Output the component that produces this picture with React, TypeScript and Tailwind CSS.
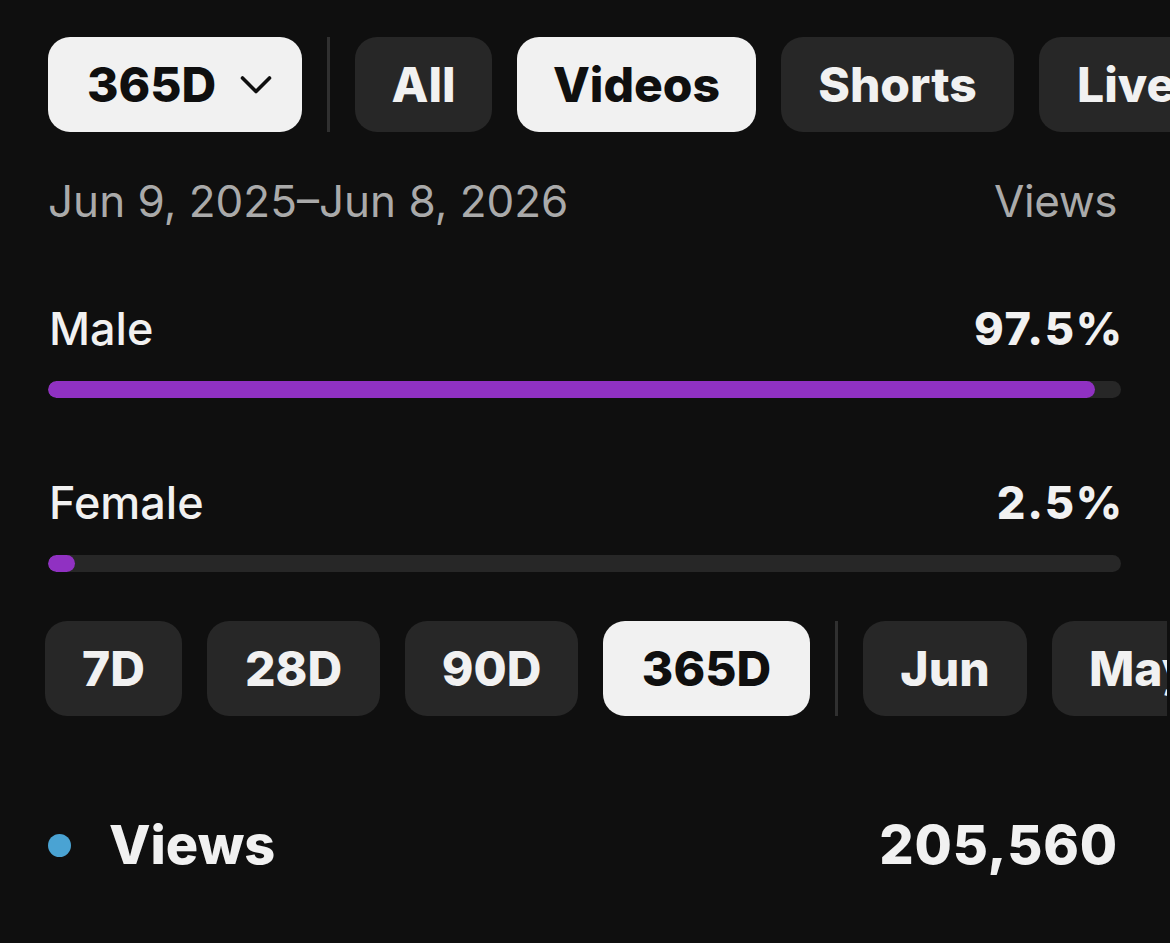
import React from "react";

function Chip({ label, active, w, className = "" }: { label: string; active?: boolean; w?: string; className?: string }) {
  return (
    <div
      className={`shrink-0 h-[95px] rounded-[22px] flex items-center justify-center font-extrabold text-[48px] leading-none ${
        active ? "bg-[#f1f1f1] text-[#0f0f0f]" : "bg-[#272727] text-[#f1f1f1]"
      } ${w ?? ""} ${className}`}
    >
      {label}
    </div>
  );
}

function Bar({ pct }: { pct: number }) {
  return (
    <div className="ml-[48px] mr-[49px] h-[17px] rounded-full bg-[#272727] overflow-hidden">
      <div className="h-full rounded-full bg-[#9031c2]" style={{ width: `${pct}%` }} />
    </div>
  );
}

export default function App() {
  return (
    <div
      className="w-[1170px] h-[943px] bg-[#0f0f0f] overflow-hidden text-[#f1f1f1]"
      style={{ fontFamily: "Inter, 'Noto Sans', sans-serif" }}
    >
      {/* top chips */}
      <div className="pt-[37px] pl-[48px] flex items-center gap-[25px] whitespace-nowrap">
        <div className="shrink-0 w-[254px] h-[95px] rounded-[22px] bg-[#f1f1f1] text-[#0f0f0f] flex items-center pl-[39px] gap-[24px] font-extrabold text-[48px] leading-none">
          <span>365D</span>
          <svg width="32" height="20" viewBox="0 0 32 20" fill="none">
            <polyline points="2.5,3 16,16.5 29.5,3" stroke="#0f0f0f" strokeWidth="3.6" strokeLinecap="round" strokeLinejoin="round" />
          </svg>
        </div>
        <div className="shrink-0 w-[3px] h-[95px] bg-[#303030]" />
        <Chip label="All" w="w-[137px]" />
        <Chip label="Videos" active w="w-[239px]" />
        <Chip label="Shorts" w="w-[233px]" />
        <Chip label="Live" className="px-[38px]" />
      </div>

      {/* date row */}
      <div className="mt-[47px] pl-[48px] pr-[53px] flex justify-between text-[44px] leading-none text-[#aaaaaa]">
        <span>Jun 9, 2025–Jun 8, 2026</span>
        <span className="tracking-[-0.01em]">Views</span>
      </div>

      {/* Male */}
      <div className="mt-[83px] pl-[49px] pr-[46px] flex justify-between text-[45px] leading-none">
        <span className="font-medium">Male</span>
        <span className="font-extrabold tracking-[0.04em]">97.5%</span>
      </div>
      <div className="mt-[30px]">
        <Bar pct={97.6} />
      </div>

      {/* Female */}
      <div className="mt-[82px] pl-[49px] pr-[46px] flex justify-between text-[45px] leading-none">
        <span className="font-medium">Female</span>
        <span className="font-extrabold tracking-[0.04em]">2.5%</span>
      </div>
      <div className="mt-[30px]">
        <Bar pct={2.5} />
      </div>

      {/* bottom chips */}
      <div className="mt-[49px] w-[1167px] overflow-hidden">
        <div className="pl-[45px] flex items-center gap-[25px] whitespace-nowrap">
          <Chip label="7D" w="w-[137px]" />
          <Chip label="28D" w="w-[173px]" />
          <Chip label="90D" w="w-[173px]" />
          <Chip label="365D" active w="w-[207px]" />
          <div className="shrink-0 w-[3px] h-[95px] bg-[#303030]" />
          <Chip label="Jun" w="w-[164px]" />
          <Chip label="May" className="px-[37px]" />
        </div>
      </div>

      {/* views row */}
      <div className="mt-[102px] pl-[48px] pr-[52px] flex items-center justify-between">
        <div className="flex items-center gap-[38px]">
          <div className="w-[23px] h-[23px] rounded-full bg-[#4aa3d3]" />
          <span className="font-extrabold text-[54px] leading-none">Views</span>
        </div>
        <span className="font-extrabold text-[54px] leading-none tracking-[0.015em]">205,560</span>
      </div>
    </div>
  );
}
